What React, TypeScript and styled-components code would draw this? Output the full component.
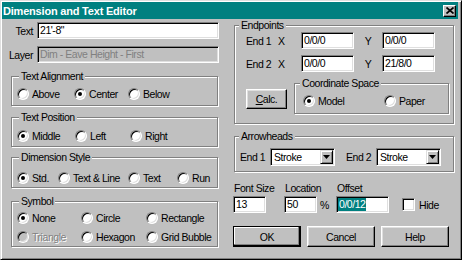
import React from "react";
import styled, { createGlobalStyle, css } from "styled-components";

const FONT = `"Liberation Sans", Arial, sans-serif`;

const GlobalStyle = createGlobalStyle`
  html, body { margin: 0; padding: 0; background: #c0c0c0; }
  body { font-family: ${FONT}; }
`;

const Window = styled.div`
  width: 462px;
  height: 260px;
  box-sizing: border-box;
  background: #c0c0c0;
  border: 1px solid;
  border-color: #dfdfdf #000 #000 #dfdfdf;
  box-shadow: inset 1px 1px 0 #fff, inset -1px -1px 0 #808080;
  padding: 1px 3px 2px 1px;
  display: flex;
  flex-direction: column;
  font-family: ${FONT};
  font-size: 10.5px;
  letter-spacing: -0.45px;
  color: #000;
  overflow: hidden;
`;

const TitleBar = styled.div`
  height: 17px;
  flex: none;
  background: #008080;
  display: flex;
  align-items: center;
  justify-content: space-between;
  padding: 0 2px 0 1px;
  color: #fff;
  font-weight: bold;
  font-size: 11px;
  letter-spacing: -0.2px;
`;

const CloseButton = styled.div`
  box-sizing: border-box;
  width: 13px;
  height: 12px;
  background: #c0c0c0;
  border: 1px solid;
  border-color: #fff #000 #000 #fff;
  box-shadow: inset -1px -1px 0 #808080;
  display: flex;
  align-items: center;
  justify-content: center;
`;

const Body = styled.div`
  display: flex;
  flex: 1;
  padding-left: 4px;
`;

const LeftCol = styled.div`
  width: 213px;
  display: flex;
  flex-direction: column;
`;

const RightCol = styled.div`
  width: 222px;
  margin-left: 14px;
  display: flex;
  flex-direction: column;
`;

const FieldRow = styled.div<{ $mt: number }>`
  display: flex;
  align-items: center;
  height: 17px;
  margin-top: ${(p) => p.$mt}px;
`;

const FieldLabel = styled.span`
  width: 27px;
  margin-right: 4px;
  text-align: right;
  flex: none;
`;

const sunken = css`
  border: 1px solid;
  border-color: #808080 #fff #fff #808080;
  box-shadow: inset 1px 1px 0 #000, inset -1px -1px 0 #dfdfdf;
`;

const Field = styled.div<{ $w?: number; $disabled?: boolean }>`
  box-sizing: border-box;
  height: 17px;
  ${(p) => (p.$w ? `width: ${p.$w}px; flex: none;` : "flex: 1;")}
  background: ${(p) => (p.$disabled ? "#c0c0c0" : "#fff")};
  color: ${(p) => (p.$disabled ? "#808080" : "#000")};
  ${sunken}
  padding: 0 2px;
  line-height: 15px;
  white-space: nowrap;
  overflow: hidden;
`;

const Selected = styled.span`
  display: inline-block;
  background: #008080;
  color: #fff;
  line-height: 13px;
  margin-left: -1px;
  padding-left: 1px;
`;

const Group = styled.div<{ $h: number; $mt: number; $pt: number; $pl: number; $ml?: number; $w?: number }>`
  position: relative;
  box-sizing: border-box;
  flex: none;
  height: ${(p) => p.$h}px;
  ${(p) => (p.$w ? `width: ${p.$w}px;` : "")}
  margin: ${(p) => p.$mt}px ${(p) => (p.$w ? 0 : 1)}px 0 ${(p) => p.$ml ?? 0}px;
  border: 1px solid #808080;
  box-shadow: inset 1px 1px 0 #fff, 1px 1px 0 #fff;
  padding: ${(p) => p.$pt}px 0 0 ${(p) => p.$pl}px;
`;

const Legend = styled.span<{ $x: number }>`
  position: absolute;
  top: -7px;
  left: ${(p) => p.$x}px;
  padding: 0 2px;
  background: #c0c0c0;
  line-height: 13px;
  white-space: nowrap;
`;

const OptRow = styled.div`
  display: flex;
  align-items: center;
  height: 13px;
  & + & {
    margin-top: 6px;
  }
`;

const Opt = styled.label<{ $w?: number; $disabled?: boolean; $gap?: number; $h?: number }>`
  display: flex;
  align-items: center;
  gap: ${(p) => p.$gap ?? 3}px;
  flex: none;
  white-space: nowrap;
  ${(p) => (p.$w ? `width: ${p.$w}px;` : "")}
  ${(p) => (p.$h ? `height: ${p.$h}px;` : "")}
  color: ${(p) => (p.$disabled ? "#808080" : "#000")};
  text-shadow: ${(p) => (p.$disabled ? "1px 1px 0 #fff" : "none")};
`;

const RadioCircle = styled.span<{ $checked?: boolean; $disabled?: boolean }>`
  flex: none;
  box-sizing: border-box;
  width: 12px;
  height: 12px;
  border-radius: 50%;
  border: 1px solid;
  border-color: #808080 #fff #fff #808080;
  background: ${(p) => (p.$disabled ? "#c0c0c0" : "#fff")};
  box-shadow: inset 1px 1px 0 #000, inset -1px -1px 0 #dfdfdf;
  display: flex;
  align-items: center;
  justify-content: center;
  &::after {
    content: "";
    display: ${(p) => (p.$checked ? "block" : "none")};
    width: 4px;
    height: 4px;
    border-radius: 50%;
    background: #000;
  }
`;

const CheckBox = styled.span`
  flex: none;
  box-sizing: border-box;
  width: 13px;
  height: 13px;
  background: #fff;
  ${sunken}
`;

const EndGrid = styled.div`
  display: grid;
  grid-template-columns: 32px 23px 53px 28px 53px;
  grid-auto-rows: 17px;
  row-gap: 6px;
  align-items: center;
`;

const CenterCell = styled.span`
  text-align: center;
`;

const CalcRow = styled.div`
  display: flex;
  align-items: center;
  gap: 7px;
  margin-top: 11px;
`;

const Button = styled.button<{ $default?: boolean; $w: number; $h: number }>`
  box-sizing: border-box;
  width: ${(p) => p.$w}px;
  height: ${(p) => p.$h}px;
  flex: none;
  padding: 0;
  font: inherit;
  letter-spacing: inherit;
  color: #000;
  background: #c0c0c0;
  border: 1px solid;
  ${(p) =>
    p.$default
      ? css`
          border-color: #000;
          box-shadow: inset -1px -1px 0 #000, inset -2px -2px 0 #808080, inset 1px 1px 0 #fff;
        `
      : css`
          border-color: #fff #000 #000 #fff;
          box-shadow: inset -1px -1px 0 #808080, inset 1px 1px 0 #dfdfdf;
        `}
`;

const ArrowRow = styled.div`
  display: flex;
  align-items: center;
  height: 18px;
`;

const InlineLabel = styled.span<{ $w: number; $ml?: number }>`
  width: ${(p) => p.$w}px;
  margin-left: ${(p) => p.$ml ?? 0}px;
  flex: none;
`;

const Select = styled.div`
  box-sizing: border-box;
  width: 65px;
  height: 18px;
  flex: none;
  display: flex;
  padding: 1px;
  background: #fff;
  ${sunken}
`;

const SelectText = styled.span`
  flex: 1;
  padding-left: 2px;
  line-height: 14px;
`;

const DropBtn = styled.span`
  box-sizing: border-box;
  width: 13px;
  height: 14px;
  background: #c0c0c0;
  border: 1px solid;
  border-color: #dfdfdf #000 #000 #dfdfdf;
  box-shadow: inset 1px 1px 0 #fff, inset -1px -1px 0 #808080;
  display: flex;
  align-items: center;
  justify-content: center;
`;

const OptionsRow = styled.div`
  display: flex;
  align-items: flex-end;
  margin-top: 10px;
`;

const OptCol = styled.div<{ $w: number }>`
  width: ${(p) => p.$w}px;
  flex: none;
  display: flex;
  flex-direction: column;
`;

const OptLabel = styled.span`
  line-height: 13px;
  margin: 0 0 1px 1px;
  white-space: nowrap;
`;

const UnitRow = styled.div`
  display: flex;
  align-items: center;
  gap: 3px;
`;

const ButtonRow = styled.div`
  display: flex;
  gap: 6px;
  margin-top: 13px;
`;

const Radio = ({
  label,
  checked,
  disabled,
  w,
}: {
  label: string;
  checked?: boolean;
  disabled?: boolean;
  w?: number;
}) => (
  <Opt $w={w} $disabled={disabled}>
    <RadioCircle $checked={checked} $disabled={disabled} />
    <span>{label}</span>
  </Opt>
);

const DropArrow = () => (
  <svg width="7" height="4" viewBox="0 0 7 4">
    <polygon points="0,0 7,0 3.5,4" fill="#000" />
  </svg>
);

export default function App() {
  return (
    <>
      <GlobalStyle />
      <Window>
        <TitleBar>
          <span>Dimension and Text Editor</span>
          <CloseButton>
            <svg width="8" height="7" viewBox="0 0 8 7">
              <path d="M0.5 0.5 L7.5 6.5 M7.5 0.5 L0.5 6.5" stroke="#000" strokeWidth="1.7" />
            </svg>
          </CloseButton>
        </TitleBar>
        <Body>
          <LeftCol>
            <FieldRow $mt={3}>
              <FieldLabel>Text</FieldLabel>
              <Field>21'-8"</Field>
            </FieldRow>
            <FieldRow $mt={7}>
              <FieldLabel>Layer</FieldLabel>
              <Field $disabled>Dim - Eave Height - First</Field>
            </FieldRow>

            <Group $h={30} $mt={13} $pt={10} $pl={5} $ml={5}>
              <Legend $x={7}>Text Alignment</Legend>
              <OptRow>
                <Radio label="Above" w={57} />
                <Radio label="Center" w={54} checked />
                <Radio label="Below" />
              </OptRow>
            </Group>

            <Group $h={30} $mt={11} $pt={11} $pl={5} $ml={5}>
              <Legend $x={7}>Text Position</Legend>
              <OptRow>
                <Radio label="Middle" w={58} checked />
                <Radio label="Left" w={55} />
                <Radio label="Right" />
              </OptRow>
            </Group>

            <Group $h={31} $mt={10} $pt={13} $pl={5} $ml={5}>
              <Legend $x={7}>Dimension Style</Legend>
              <OptRow>
                <Radio label="Std." w={41} checked />
                <Radio label="Text & Line" w={70} />
                <Radio label="Text" w={49} />
                <Radio label="Run" />
              </OptRow>
            </Group>

            <Group $h={46} $mt={13} $pt={9} $pl={5} $ml={5}>
              <Legend $x={7}>Symbol</Legend>
              <OptRow>
                <Radio label="None" w={64} checked />
                <Radio label="Circle" w={65} />
                <Radio label="Rectangle" />
              </OptRow>
              <OptRow>
                <Radio label="Triangle" w={64} disabled />
                <Radio label="Hexagon" w={65} />
                <Radio label="Grid Bubble" />
              </OptRow>
            </Group>
          </LeftCol>

          <RightCol>
            <Group $h={99} $mt={6} $pt={6} $pl={11} $ml={1}>
              <Legend $x={4}>Endpoints</Legend>
              <EndGrid>
                <span>End 1</span>
                <span>X</span>
                <Field $w={53}>0/0/0</Field>
                <CenterCell>Y</CenterCell>
                <Field $w={53}>0/0/0</Field>
                <span>End 2</span>
                <span>X</span>
                <Field $w={53}>0/0/0</Field>
                <CenterCell>Y</CenterCell>
                <Field $w={53}>21/8/0</Field>
              </EndGrid>
              <CalcRow>
                <Button $w={41} $h={20}>
                  <u>C</u>alc.
                </Button>
                <Group $h={31} $mt={0} $pt={10} $pl={8} $w={155}>
                  <Legend $x={5}>Coordinate Space</Legend>
                  <OptRow>
                    <Radio label="Model" w={81} checked />
                    <Radio label="Paper" />
                  </OptRow>
                </Group>
              </CalcRow>
            </Group>

            <Group $h={36} $mt={12} $pt={11} $pl={5} $ml={1}>
              <Legend $x={4}>Arrowheads</Legend>
              <ArrowRow>
                <InlineLabel $w={30}>End 1</InlineLabel>
                <Select>
                  <SelectText>Stroke</SelectText>
                  <DropBtn>
                    <DropArrow />
                  </DropBtn>
                </Select>
                <InlineLabel $w={30} $ml={11}>
                  End 2
                </InlineLabel>
                <Select>
                  <SelectText>Stroke</SelectText>
                  <DropBtn>
                    <DropArrow />
                  </DropBtn>
                </Select>
              </ArrowRow>
            </Group>

            <OptionsRow>
              <OptCol $w={51}>
                <OptLabel>Font Size</OptLabel>
                <Field $w={33}>13</Field>
              </OptCol>
              <OptCol $w={52}>
                <OptLabel>Location</OptLabel>
                <UnitRow>
                  <Field $w={33}>50</Field>
                  <span>%</span>
                </UnitRow>
              </OptCol>
              <OptCol $w={66}>
                <OptLabel>Offset</OptLabel>
                <Field $w={53}>
                  <Selected>0/0/12</Selected>
                </Field>
              </OptCol>
              <Opt $h={17} $gap={4}>
                <CheckBox />
                <span>Hide</span>
              </Opt>
            </OptionsRow>

            <ButtonRow>
              <Button $w={68} $h={21} $default>
                OK
              </Button>
              <Button $w={68} $h={21}>
                Cancel
              </Button>
              <Button $w={68} $h={21}>
                Help
              </Button>
            </ButtonRow>
          </RightCol>
        </Body>
      </Window>
    </>
  );
}
